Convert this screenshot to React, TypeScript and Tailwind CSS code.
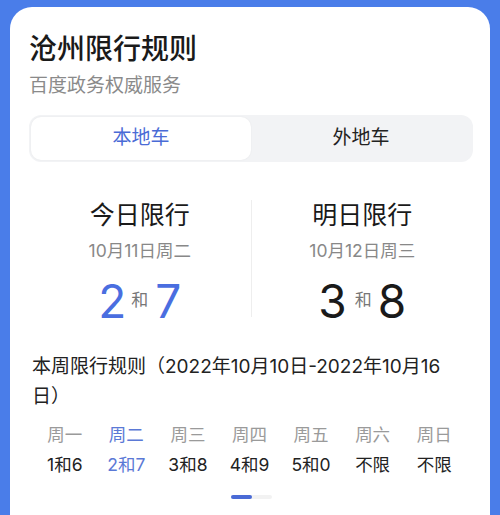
import React from "react";

const font = { fontFamily: '"Inter", "Noto Sans CJK SC", sans-serif' };

const days = [
  { d: "周一", v: "1和6" },
  { d: "周二", v: "2和7", active: true },
  { d: "周三", v: "3和8" },
  { d: "周四", v: "4和9" },
  { d: "周五", v: "5和0" },
  { d: "周六", v: "不限" },
  { d: "周日", v: "不限" },
];

export default function App() {
  return (
    <div className="h-[515px] w-[500px] overflow-hidden bg-[#4a7de9] pt-[7px]" style={font}>
      <div className="mx-[10px] h-[520px] rounded-t-[22px] bg-white pl-[19px] pr-[17px] pt-[25px]">
        <div className="text-[28px] leading-[34px] font-medium text-[#1a1a1a]">沧州限行规则</div>
        <div className="mt-[7px] text-[19px] leading-[26px] text-[#8a8a8a]">百度政务权威服务</div>

        <div className="mt-[16px] flex h-[47px] rounded-[12px] bg-[#f2f3f5] p-[2px]">
          <div className="flex flex-1 items-center justify-center rounded-[10px] bg-white text-[19px] text-[#4a6bd6] shadow-[0_0_2px_rgba(0,0,0,0.06)]">
            本地车
          </div>
          <div className="flex flex-1 items-center justify-center text-[19px] text-[#222]">外地车</div>
        </div>

        <div className="mt-[38px] flex">
          <div className="flex flex-1 flex-col items-center">
            <div className="text-[25px] leading-[30px] text-[#1a1a1a]">今日限行</div>
            <div className="mt-[9px] text-[17.5px] leading-[24px] text-[#888]">10月11日周二</div>
            <div className="mt-[10px] flex h-[56px] items-center text-[#4a6ee0]">
              <span className="text-[46px] leading-[56px]">2</span>
              <span className="ml-[5px] mr-[7px] text-[17px] text-[#777]">和</span>
              <span className="text-[46px] leading-[56px]">7</span>
            </div>
          </div>
          <div className="h-[117px] w-px bg-[#eeeeee]" />
          <div className="flex flex-1 flex-col items-center">
            <div className="text-[25px] leading-[30px] text-[#1a1a1a]">明日限行</div>
            <div className="mt-[9px] text-[17.5px] leading-[24px] text-[#888]">10月12日周三</div>
            <div className="mt-[10px] flex h-[56px] items-center text-[#1a1a1a]">
              <span className="text-[46px] leading-[56px]">3</span>
              <span className="ml-[8px] mr-[6px] text-[17px] text-[#777]">和</span>
              <span className="text-[46px] leading-[56px]">8</span>
            </div>
          </div>
        </div>

        <div className="mt-[23px] pl-[3px] text-[19px] leading-[30px] text-[#222]">
          本周限行规则（2022年10月10日-2022年10月16
          <br />
          日）
        </div>

        <div className="ml-[5px] mt-[8px] grid w-[431px] grid-cols-7">
          {days.map((x) => (
            <div key={x.d} className="flex flex-col items-center text-[17.5px] leading-[30px]">
              <span className={x.active ? "text-[#5b79d6]" : "text-[#9a9a9a]"}>{x.d}</span>
              <span className={x.active ? "text-[#5b79d6]" : "text-[#222]"}>{x.v}</span>
            </div>
          ))}
        </div>

        <div className="mt-[15px] flex justify-center">
          <div className="flex h-[4px] w-[41px] rounded-full bg-[#f2f2f2]">
            <div className="h-[4px] w-[21px] rounded-full bg-[#4a6bd6]" />
          </div>
        </div>
      </div>
    </div>
  );
}
